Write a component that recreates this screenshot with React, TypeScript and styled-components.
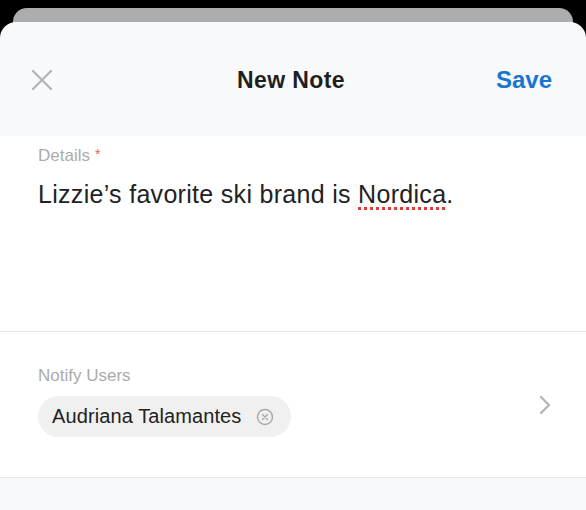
import React from "react";
import styled, { createGlobalStyle } from "styled-components";

const Global = createGlobalStyle`
  html, body { margin: 0; padding: 0; background: #000; }
  body { font-family: "Liberation Sans", Arial, sans-serif; }
  * { box-sizing: border-box; }
`;

const Screen = styled.div`
  width: 586px;
  height: 510px;
  background: #000;
  display: flex;
  flex-direction: column;
  overflow: hidden;
`;

const BackSheet = styled.div`
  margin: 8px 13px 0;
  height: 30px;
  background: #adadad;
  border-radius: 14px 14px 0 0;
  flex-shrink: 0;
`;

const Sheet = styled.div`
  margin-top: -16px;
  flex: 1;
  background: #f8f9fa;
  border-radius: 16px 16px 0 0;
  display: flex;
  flex-direction: column;
`;

const Header = styled.div`
  height: 114px;
  display: grid;
  grid-template-columns: 1fr auto 1fr;
  align-items: center;
  padding: 2px 34px 0 30px;
`;

const CloseButton = styled.button`
  border: none;
  background: none;
  padding: 0;
  width: 24px;
  height: 24px;
  display: flex;
  align-items: center;
  justify-content: center;
  justify-self: start;
`;

const Title = styled.div`
  font-size: 23px;
  font-weight: 700;
  color: #1f1f1f;
  letter-spacing: 0.4px;
`;

const SaveButton = styled.button`
  justify-self: end;
  border: none;
  background: none;
  padding: 0;
  font-family: inherit;
  font-size: 24px;
  font-weight: 700;
  color: #1a74d2;
`;

const Section = styled.div<{ $height: number }>`
  background: #fff;
  height: ${(p) => p.$height}px;
  border-bottom: 1px solid #e6e6e6;
  padding: 0 38px;
  display: flex;
  flex-direction: column;
`;

const Label = styled.div<{ $top: number }>`
  margin-top: ${(p) => p.$top}px;
  font-size: 17px;
  color: #ababab;
`;

const Required = styled.span`
  color: #e8605c;
  font-size: 14px;
  vertical-align: 2px;
  margin-left: 5px;
`;

const BodyText = styled.div`
  margin-top: 14px;
  font-size: 25px;
  letter-spacing: 0.3px;
  color: #222;
`;

const Misspelled = styled.span`
  text-decoration: underline dotted #e53935;
  text-decoration-thickness: 3px;
  text-underline-offset: 4px;
`;

const UsersRow = styled.div`
  display: flex;
  align-items: flex-start;
  justify-content: space-between;
  margin-top: 10px;
`;

const Chip = styled.div`
  display: inline-flex;
  align-items: center;
  gap: 15px;
  height: 41px;
  padding: 0 17px 0 14px;
  border-radius: 21px;
  background: #f0f0f0;
  font-size: 20px;
  letter-spacing: 0.1px;
  color: #222;
`;

const Chevron = styled.div`
  margin-top: -1px;
  margin-right: -3px;
  display: flex;
`;

export default function App() {
  return (
    <Screen>
      <Global />
      <BackSheet />
      <Sheet>
        <Header>
          <CloseButton aria-label="Close">
            <svg width="22" height="22" viewBox="0 0 22 22">
              <path d="M2 2 L20 20 M20 2 L2 20" stroke="#b5b5b5" strokeWidth="2.2" strokeLinecap="round" />
            </svg>
          </CloseButton>
          <Title>New Note</Title>
          <SaveButton>Save</SaveButton>
        </Header>
        <Section $height={196}>
          <Label $top={10}>
            Details<Required>*</Required>
          </Label>
          <BodyText>
            Lizzie’s favorite ski brand is <Misspelled>Nordica</Misspelled>.
          </BodyText>
        </Section>
        <Section $height={146}>
          <Label $top={34}>Notify Users</Label>
          <UsersRow>
            <Chip>
              Audriana Talamantes
              <svg width="18" height="18" viewBox="0 0 18 18">
                <circle cx="9" cy="9" r="7.5" fill="none" stroke="#a8a8a8" strokeWidth="1.4" />
                <path d="M6.5 6.5 L11.5 11.5 M11.5 6.5 L6.5 11.5" stroke="#a8a8a8" strokeWidth="1.4" strokeLinecap="round" />
              </svg>
            </Chip>
            <Chevron>
              <svg width="12" height="20" viewBox="0 0 12 20">
                <path d="M2 2 L10 10 L2 18" fill="none" stroke="#b3b3b3" strokeWidth="2.2" strokeLinecap="round" strokeLinejoin="round" />
              </svg>
            </Chevron>
          </UsersRow>
        </Section>
      </Sheet>
    </Screen>
  );
}
